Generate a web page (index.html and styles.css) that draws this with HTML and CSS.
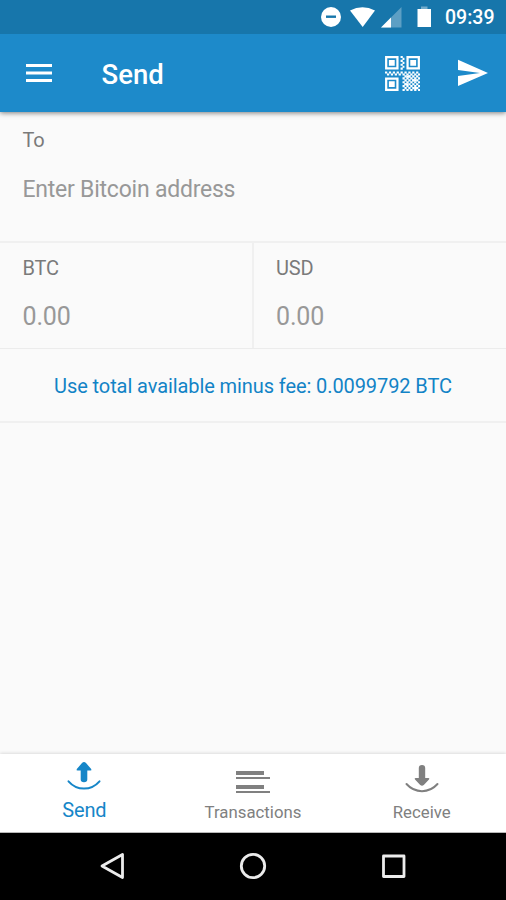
FILE: index.html
```html
<!DOCTYPE html>
<html lang="en">
<head>
<meta charset="utf-8">
<title>Send</title>
<link rel="stylesheet" href="styles.css">
</head>
<body>
<div class="screen">
  <div class="status">
    <svg width="122" height="34" viewBox="320 0 122 34">
      <circle cx="331" cy="17" r="10" fill="#fff"/>
      <path d="M326 16.700h10" stroke="#1776ab" stroke-width="2.400"/>
      <path d="M350 10.600Q362.500 3.800 375 10.600L362.700 27Z" fill="#fff"/>
      <path d="M401.500 7v20.500H381Z" fill="#fff" opacity=".3"/>
      <path d="M391 17.500v10H381Z" fill="#fff"/>
      <path d="M421 6.500h6.500v2.500H421Z" fill="#fff" opacity=".4"/>
      <path d="M417.500 9H431v18h-13.500Z" fill="#fff"/>
    </svg>
    <span class="clock">09:39</span>
  </div>
  <header class="appbar">
    <svg class="menu" width="26" height="20" viewBox="0 0 26 20"><path d="M0 2.500h26M0 10h26M0 17.500h26" stroke="#fff" stroke-width="3"/></svg>
    <h1>Send</h1>
    <svg class="qr" width="35" height="35" viewBox="0 0 18 18">
      <g fill="none" stroke="#fff" stroke-width="1.150"><path d="M.6.600h5.800v5.800H.6ZM11.600.600h5.800v5.800h-5.800ZM.6 11.600h5.800v5.800H.6Z"/></g>
      <path fill="#fff" d="M2 2h3v3H2ZM13 2h3v3h-3ZM2 13h3v3H2Z"/>
      <path stroke="#fff" stroke-width="1.100" stroke-dasharray="1.150 .850" d="M8 .5h2M9 1.500h1M8 2.500h2M9 3.500h1M8 4.500h2M9 5.500h1M8 6.500h2M0 8.500h18M1 9.500h17M10 10.500h8M9 11.500h9M10 12.500h8M9 13.500h9M10 14.500h8M9 15.500h9M10 16.500h8M9 17.500h9"/>
      <path fill="#fff" d="M11 10h2v1h-2zM14 12h2v1h-2zM10 14h2v1h-2zM15 16h2v1h-2z"/>
    </svg>
    <svg class="plane" width="30" height="28" viewBox="0 0 30 28"><path fill="#fff" d="M0 .8L30 14 0 27V17L22 14 0 11Z"/></svg>
  </header>
  <main>
    <section class="to">
      <div class="label">To</div>
      <div class="address">Enter Bitcoin address</div>
    </section>
    <section class="amounts">
      <div class="amount"><div class="label">BTC</div><div class="value">0.00</div></div>
      <div class="amount"><div class="label">USD</div><div class="value">0.00</div></div>
    </section>
    <div class="fee">Use total available minus fee: 0.0099792 BTC</div>
  </main>
  <nav class="tabs">
    <div class="tab active">
      <svg width="36" height="32" viewBox="0 0 36 32"><path fill="currentColor" d="M18 1Q19 1 20 2L25.200 8Q26 9.500 24.500 9.500H21.300V18.500Q21.300 21.200 18 21.200T14.700 18.500V9.500H11.500Q10 9.500 10.800 8L16 2Q17 1 18 1Z"/><path d="M2.500 20.300C11 30 25 30 33.500 20.300" fill="none" stroke="currentColor" stroke-width="2" stroke-linecap="round"/></svg>
      <span>Send</span>
    </div>
    <div class="tab">
      <svg width="36" height="32" viewBox="0 0 36 32"><path fill="currentColor" d="M1 10h28v4H1zM1 16h34v2H1zM1 24h28v4H1zM1 30h34v2H1z"/></svg>
      <span>Transactions</span>
    </div>
    <div class="tab">
      <svg width="36" height="32" viewBox="0 0 36 32"><path fill="currentColor" d="M18 4Q21.200 4 21.200 7V17H24.500Q26 17 25 18.500L19.800 24Q18 25.500 16.200 24L11 18.500Q10 17 11.500 17H14.800V7Q14.800 4 18 4Z"/><path d="M2.500 23C11 32.500 25 32.500 33.500 23" fill="none" stroke="currentColor" stroke-width="2" stroke-linecap="round"/></svg>
      <span>Receive</span>
    </div>
  </nav>
  <footer class="system">
    <svg width="28" height="28" viewBox="0 0 28 28"><path d="M23.500 2.500v23L3 14Z"/></svg>
    <svg width="28" height="28" viewBox="0 0 28 28"><circle cx="14" cy="14" r="11.700"/></svg>
    <svg width="28" height="28" viewBox="0 0 28 28"><path d="M3.500 4h20.500v20.500H3.500Z"/></svg>
  </footer>
</div>
</body>
</html>
```

FILE: styles.css
```css
* { box-sizing: border-box; }
body { margin: 0; font-family: Roboto, sans-serif; color: #7a7a7a; }
svg { display: block; flex: none; }
.screen { width: 506px; height: 900px; display: flex; flex-direction: column; background: #fafafa; overflow: hidden; }
.status { height: 34px; flex: none; background: #1776ab; display: flex; justify-content: flex-end; padding-right: 12px; gap: 3px; z-index: 2; }
.clock { color: #fff; font-size: 19.500px; font-weight: 500; line-height: 36px; width: 49px; white-space: nowrap; }
.appbar { height: 78px; flex: none; background: #1d8aca; display: flex; align-items: center; padding: 0 18px 0 26px; box-shadow: 0 1px 5px rgba(0,0,0,.5); color: #fff; z-index: 1; }
.menu { width: 26px; }
h1 { margin: 3px 0 0 49.500px; font-size: 27.500px; font-weight: 500; line-height: 36px; flex: 1; }
.qr { margin-right: 38px; }
main { flex: 1; }
.label { font-size: 20px; line-height: 24px; letter-spacing: -.15px; }
.to { height: 131px; padding: 16px 22.500px 0; border-bottom: 2px solid #f0f0f0; }
.address { margin-top: 23px; font-size: 23px; line-height: 30px; letter-spacing: -.23px; color: #989898; }
.amounts { height: 106px; display: flex; border-bottom: 1px solid #ececec; }
.amount { flex: none; width: 254px; padding: 13px 22px 0 22.500px; }
.amount:first-child { border-right: 2px solid #f0f0f0; }
.amount + .amount { padding-left: 22px; }
.value { margin-top: 21px; font-size: 25px; line-height: 32px; letter-spacing: -.15px; color: #989898; }
.fee { height: 74px; border-bottom: 2px solid #f0f0f0; text-align: center; font-size: 20px; line-height: 75px; letter-spacing: -.09px; color: #1283c6; white-space: nowrap; }
.tabs { height: 79px; flex: none; display: flex; background: #fff; box-shadow: 0 -1px 3px rgba(0,0,0,.12); border-bottom: 1px solid #b8b8b8; z-index: 1; }
.tab { flex: 1; display: flex; flex-direction: column; align-items: center; padding-top: 7px; color: #808080; }
.tab span { font-size: 16.800px; line-height: 24px; margin-top: 7px; }
.tab.active { color: #1686c8; }
.tab.active span { font-size: 20px; letter-spacing: -.2px; margin-top: 5px; }
.system { height: 67px; flex: none; background: #000; display: flex; justify-content: center; gap: 112.500px; padding-top: 19px; }
.system svg { fill: none; stroke: #ececec; stroke-width: 2.800; stroke-linejoin: round; }
```
